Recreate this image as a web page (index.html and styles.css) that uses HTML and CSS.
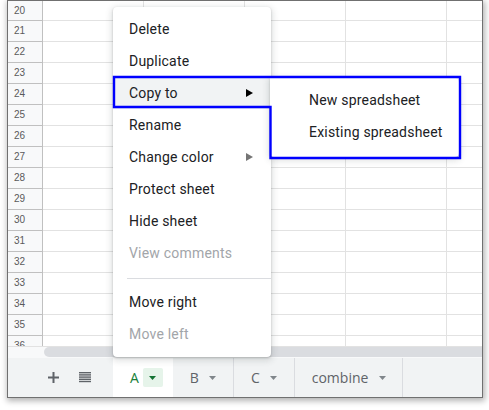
FILE: index.html
```html
<!DOCTYPE html>
<html lang="en">
<head>
<meta charset="utf-8">
<title>Sheet tab menu</title>
<link rel="stylesheet" href="styles.css">
</head>
<body>
<div class="window">
  <div class="grid">
    <div class="rh">20</div><div class="c"></div><div class="c"></div><div class="c"></div><div class="c"></div><div class="c"></div>
    <div class="rh">21</div><div class="c"></div><div class="c"></div><div class="c"></div><div class="c"></div><div class="c"></div>
    <div class="rh">22</div><div class="c"></div><div class="c"></div><div class="c"></div><div class="c"></div><div class="c"></div>
    <div class="rh">23</div><div class="c"></div><div class="c"></div><div class="c"></div><div class="c"></div><div class="c"></div>
    <div class="rh">24</div><div class="c"></div><div class="c"></div><div class="c"></div><div class="c"></div><div class="c"></div>
    <div class="rh">25</div><div class="c"></div><div class="c"></div><div class="c"></div><div class="c"></div><div class="c"></div>
    <div class="rh">26</div><div class="c"></div><div class="c"></div><div class="c"></div><div class="c"></div><div class="c"></div>
    <div class="rh">27</div><div class="c"></div><div class="c"></div><div class="c"></div><div class="c"></div><div class="c"></div>
    <div class="rh">28</div><div class="c"></div><div class="c"></div><div class="c"></div><div class="c"></div><div class="c"></div>
    <div class="rh">29</div><div class="c"></div><div class="c"></div><div class="c"></div><div class="c"></div><div class="c"></div>
    <div class="rh">30</div><div class="c"></div><div class="c"></div><div class="c"></div><div class="c"></div><div class="c"></div>
    <div class="rh">31</div><div class="c"></div><div class="c"></div><div class="c"></div><div class="c"></div><div class="c"></div>
    <div class="rh">32</div><div class="c"></div><div class="c"></div><div class="c"></div><div class="c"></div><div class="c"></div>
    <div class="rh">33</div><div class="c"></div><div class="c"></div><div class="c"></div><div class="c"></div><div class="c"></div>
    <div class="rh">34</div><div class="c"></div><div class="c"></div><div class="c"></div><div class="c"></div><div class="c"></div>
    <div class="rh">35</div><div class="c"></div><div class="c"></div><div class="c"></div><div class="c"></div><div class="c"></div>
    <div class="rh">36</div><div class="c"></div><div class="c"></div><div class="c"></div><div class="c"></div><div class="c"></div>
  </div>
  <div class="hscroll"><div class="thumb"></div></div>
  <div class="tabbar">
    <div class="tools">
      <svg class="ico-plus" width="11" height="11" viewBox="0 0 11 11"><path d="M5.5 0v11M0 5.5h11" stroke="#5f6368" stroke-width="2"/></svg>
      <svg class="ico-list" width="12" height="11" viewBox="0 0 12 11"><g fill="#5f6368"><rect y="0" width="12" height="1.4"/><rect y="2.2" width="12" height="1.4"/><rect y="4.4" width="12" height="1.4"/><rect y="6.6" width="12" height="1.4"/><rect y="8.8" width="12" height="1.4"/></g></svg>
    </div>
    <div class="tab active"><span class="tab-name">A</span><span class="chip"><svg width="7" height="4" viewBox="0 0 7 4"><path d="M0 0h7L3.5 4z"/></svg></span></div>
    <div class="tab"><span class="tab-name">B</span><span class="chip"><svg width="7" height="4" viewBox="0 0 7 4"><path d="M0 0h7L3.5 4z"/></svg></span></div>
    <div class="tab"><span class="tab-name">C</span><span class="chip"><svg width="7" height="4" viewBox="0 0 7 4"><path d="M0 0h7L3.5 4z"/></svg></span></div>
    <div class="tab"><span class="tab-name">combine</span><span class="chip"><svg width="7" height="4" viewBox="0 0 7 4"><path d="M0 0h7L3.5 4z"/></svg></span></div>
  </div>
</div>

<div class="menu">
  <div class="item">Delete</div>
  <div class="item">Duplicate</div>
  <div class="item hl">Copy to<svg class="arrow" width="7" height="8" viewBox="0 0 7 8"><path d="M0 0l7 4-7 4z" fill="#000"/></svg></div>
  <div class="item">Rename</div>
  <div class="item">Change color<svg class="arrow" width="7" height="8" viewBox="0 0 7 8"><path d="M0 0l7 4-7 4z" fill="#757575"/></svg></div>
  <div class="item">Protect sheet</div>
  <div class="item">Hide sheet</div>
  <div class="item disabled">View comments</div>
  <div class="sep"></div>
  <div class="item">Move right</div>
  <div class="item disabled">Move left</div>
</div>

<div class="submenu">
  <div class="item">New spreadsheet</div>
  <div class="item">Existing spreadsheet</div>
</div>

<svg class="focus-ring" width="489" height="410" viewBox="0 0 489 410">
  <path d="M114 77H460V158H270.5V107H114Z" fill="none" stroke="#0000ff" stroke-width="2.4"/>
</svg>
</body>
</html>
```

FILE: styles.css
```css
* {
  box-sizing: border-box;
}

body {
  margin: 0;
  width: 489px;
  height: 410px;
  overflow: hidden;
  background: #fff;
  font-family: Roboto, "Liberation Sans", Arial, sans-serif;
  position: relative;
}

/* spreadsheet frame */
.window {
  margin-left: 7px;
  width: 476px;
  height: 398px;
  border: 1px solid #707070;
  background: #fff;
  box-shadow: 1px 2px 6px 1px rgba(0, 0, 0, 0.3);
  display: flex;
  flex-direction: column;
}

.grid {
  flex: 0 0 345px;
  overflow: hidden;
  display: grid;
  grid-template-columns: 35px repeat(5, 101px);
  grid-template-rows: 20px;
  grid-auto-rows: 21px;
}

.rh {
  background: #f8f9fa;
  border-right: 1px solid #c0c0c0;
  border-bottom: 1px solid #c0c0c0;
  font: 10px "Liberation Sans", Arial, sans-serif;
  color: #5a5a5a;
  padding: 4px 0 0 6px;
  line-height: 11px;
}

.c {
  border-right: 1px solid #e2e2e2;
  border-bottom: 1px solid #e2e2e2;
}

/* horizontal scrollbar */
.hscroll {
  flex: 0 0 12px;
  border-top: 1px solid #e2e2e2;
  background: #f8f9fa;
  padding: 0 0 1px 36px;
}

.thumb {
  height: 100%;
  background: #dadce0;
  border-radius: 5px 0 0 5px;
}

/* sheet tabs */
.tabbar {
  flex: 1;
  background: #f1f3f4;
  display: flex;
}

.tools {
  flex: 0 0 105px;
  display: flex;
  align-items: center;
  padding-left: 40px;
  gap: 20px;
}

.tab {
  display: flex;
  align-items: center;
  padding: 0 10px 0 17px;
  gap: 4px;
  border-right: 1px solid #dadce0;
  font-family: "Open Sans", Roboto, sans-serif;
  font-size: 14px;
  font-weight: 500;
  color: #5f6368;
}

.tab.active {
  background: #fff;
  color: #188038;
  border-right: none;
}

.chip {
  width: 20px;
  height: 19px;
  border-radius: 2px;
  display: flex;
  align-items: center;
  justify-content: center;
  fill: #80868b;
}

.tab.active .chip {
  background: #e6f4ea;
  fill: #137333;
}

/* context menu */
.menu,
.submenu {
  position: absolute;
  background: #fff;
  border-radius: 4px;
  box-shadow: 0 2px 6px 2px rgba(60, 64, 67, 0.15), 0 1px 2px rgba(60, 64, 67, 0.3);
  padding: 6px 0;
}

.menu {
  left: 113px;
  top: 7px;
  width: 158px;
  height: 350px;
}

.submenu {
  left: 270px;
  top: 78px;
  width: 189px;
  height: 79px;
  border-radius: 0 4px 4px 4px;
}

.item {
  height: 32px;
  display: flex;
  align-items: center;
  justify-content: space-between;
  padding: 0 18px 0 16px;
  font-size: 14px;
  letter-spacing: 0.2px;
  color: #202124;
  white-space: nowrap;
}

.submenu .item {
  padding-left: 39px;
}

.item.hl {
  background: #f1f3f4;
}

.item.disabled {
  color: #a2a5a9;
}

.sep {
  height: 1px;
  background: #dadce0;
  margin: 9px 0 7px 14px;
}

.focus-ring {
  position: absolute;
  left: 0;
  top: 0;
  pointer-events: none;
}
```
